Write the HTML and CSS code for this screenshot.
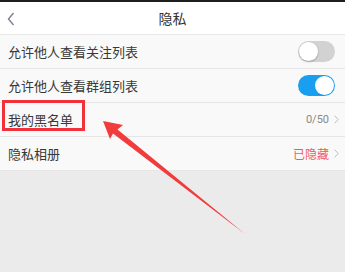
FILE: index.html
```html
<!DOCTYPE html>
<html lang="zh">
<head>
<meta charset="utf-8">
<link rel="stylesheet" href="styles.css">
</head>
<body>
<div class="page">
  <div class="topline"></div>
  <header class="header">
    <svg class="back" width="8" height="14" viewBox="0 0 8 14"><path d="M6.5 1 L1.5 7 L6.5 13" fill="none" stroke="#7a8190" stroke-width="1.4"/></svg>
    <div class="title">隐私</div>
  </header>
  <div class="list">
    <div class="row"><span class="label">允许他人查看关注列表</span><span class="toggle"><span class="knob"></span></span></div>
    <div class="row"><span class="label">允许他人查看群组列表</span><span class="toggle on"><span class="knob"></span></span></div>
    <div class="row"><span class="label">我的黑名单</span><span class="right"><span class="count">0/50</span><svg class="chev" width="5" height="9" viewBox="0 0 5 9"><path d="M0.7 0.7 L4.2 4.5 L0.7 8.3" fill="none" stroke="#bdbdbd" stroke-width="1"/></svg></span></div>
    <div class="row"><span class="label">隐私相册</span><span class="right"><span class="hidden">已隐藏</span><svg class="chev" width="5" height="9" viewBox="0 0 5 9"><path d="M0.7 0.7 L4.2 4.5 L0.7 8.3" fill="none" stroke="#bdbdbd" stroke-width="1"/></svg></span></div>
  </div>
  <svg class="overlay" width="345" height="272" viewBox="0 0 345 272">
    <rect x="3.5" y="101.5" width="80" height="28" fill="none" stroke="#f2323a" stroke-width="3"/>
    <polygon points="103,121 123,125 117.5,129.5 245,234 113,133.5 110,139" fill="#f23b3b"/>
  </svg>
</div>
</body>
</html>
```

FILE: styles.css
```css
html, body {
  margin: 0;
  padding: 0;
}
body {
  width: 345px;
  height: 272px;
  overflow: hidden;
  background: #ebebeb;
  font-family: "Noto Sans CJK SC", "Noto Sans", sans-serif;
}
.page {
  position: relative;
  width: 345px;
  height: 272px;
}
.topline {
  height: 2px;
  background: #1e1e1e;
}
.header {
  position: relative;
  height: 32px;
  background: #ffffff;
  border-bottom: 1px solid #e8e8e8;
  display: flex;
  align-items: center;
  justify-content: center;
}
.back {
  position: absolute;
  left: 7px;
  top: 10px;
}
.title {
  font-size: 14px;
  color: #333;
  line-height: 1;
}
.list {
  background: #f9f9f9;
}
.row {
  height: 33px;
  border-bottom: 1px solid #e6e6e6;
  display: flex;
  align-items: center;
  justify-content: space-between;
  padding: 0 6px 0 8px;
}
.label {
  font-size: 13px;
  color: #383838;
  line-height: 1;
}
.toggle {
  position: relative;
  width: 37px;
  height: 21px;
  border-radius: 11px;
  background: #d2d2d2;
  margin-right: 4px;
}
.knob {
  position: absolute;
  left: 1px;
  top: 1px;
  width: 19px;
  height: 19px;
  border-radius: 50%;
  background: #fff;
  box-shadow: 0 1px 2px rgba(0,0,0,0.25);
}
.toggle.on {
  background: #1a9ef0;
}
.toggle.on .knob {
  left: 17px;
  box-shadow: none;
}
.right {
  display: flex;
  align-items: center;
  gap: 5px;
}
.count {
  font-family: "Roboto", "Noto Sans", sans-serif;
  font-size: 11px;
  color: #888;
}
.hidden {
  font-size: 12px;
  color: #f25a5a;
}
.chev {
  display: block;
}
.overlay {
  position: absolute;
  left: 0;
  top: 0;
}
```
